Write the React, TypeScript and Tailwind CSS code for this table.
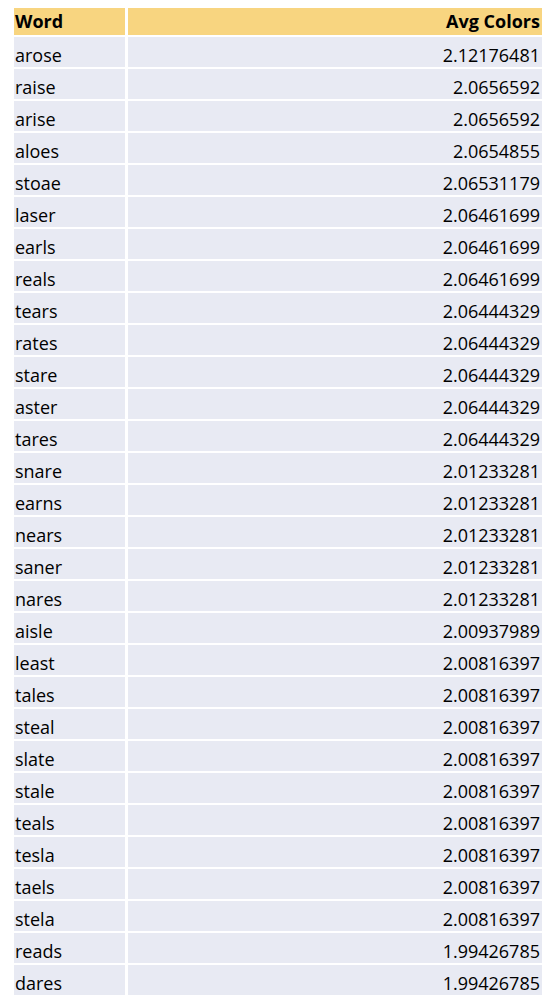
const rows: [string, string][] = [
  ["arose", "2.12176481"],
  ["raise", "2.0656592"],
  ["arise", "2.0656592"],
  ["aloes", "2.0654855"],
  ["stoae", "2.06531179"],
  ["laser", "2.06461699"],
  ["earls", "2.06461699"],
  ["reals", "2.06461699"],
  ["tears", "2.06444329"],
  ["rates", "2.06444329"],
  ["stare", "2.06444329"],
  ["aster", "2.06444329"],
  ["tares", "2.06444329"],
  ["snare", "2.01233281"],
  ["earns", "2.01233281"],
  ["nears", "2.01233281"],
  ["saner", "2.01233281"],
  ["nares", "2.01233281"],
  ["aisle", "2.00937989"],
  ["least", "2.00816397"],
  ["tales", "2.00816397"],
  ["steal", "2.00816397"],
  ["slate", "2.00816397"],
  ["stale", "2.00816397"],
  ["teals", "2.00816397"],
  ["tesla", "2.00816397"],
  ["taels", "2.00816397"],
  ["stela", "2.00816397"],
  ["reads", "1.99426785"],
  ["dares", "1.99426785"],
]

export default function App() {
  return (
    <div className="w-[552px] h-[1000px] bg-white pt-[8px] pl-[14px] overflow-hidden font-['Open_Sans',sans-serif] text-[18px] text-black">
      <div className="grid grid-cols-[111px_414px] gap-x-[3px] gap-y-[2px]">
        <div className="h-[27px] bg-[#f8d580] flex items-center pl-[1px] font-bold">Word</div>
        <div className="h-[27px] bg-[#f8d580] flex items-center justify-end pr-[2px] font-bold">
          Avg Colors
        </div>
        {rows.map(([word, avg]) => (
          <>
            <div key={word} className="h-[30px] bg-[#e8eaf3] flex items-center pt-[6px] pl-[1px]">
              {word}
            </div>
            <div key={word + "-v"} className="h-[30px] bg-[#e8eaf3] flex items-center justify-end pt-[6px] pr-[2px]">
              {avg}
            </div>
          </>
        ))}
      </div>
    </div>
  )
}
